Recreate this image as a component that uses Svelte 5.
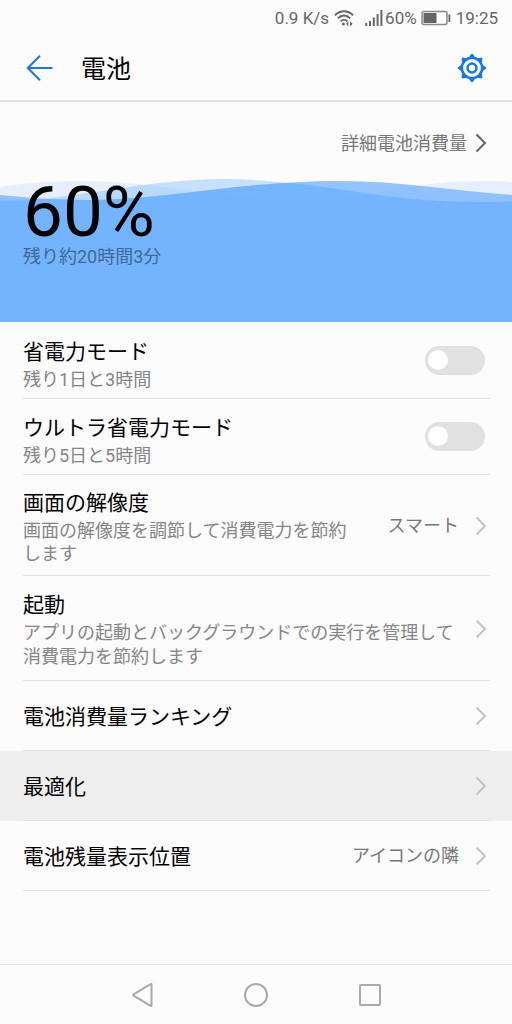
<script lang="ts">
	type Row = {
		id: string;
		title: string;
		description?: string;
		value?: string;
		kind: 'toggle' | 'link';
		tall?: boolean;
		pressed?: boolean;
	};

	const rows: Row[] = [
		{ id: 'saver', title: '省電力モード', description: '残り1日と3時間', kind: 'toggle' },
		{ id: 'ultra', title: 'ウルトラ省電力モード', description: '残り5日と5時間', kind: 'toggle' },
		{
			id: 'resolution',
			title: '画面の解像度',
			description: '画面の解像度を調節して消費電力を節約します',
			value: 'スマート',
			kind: 'link'
		},
		{
			id: 'launch',
			title: '起動',
			description: 'アプリの起動とバックグラウンドでの実行を管理して消費電力を節約します',
			kind: 'link',
			tall: true
		},
		{ id: 'ranking', title: '電池消費量ランキング', kind: 'link' },
		{ id: 'optimize', title: '最適化', kind: 'link', pressed: true },
		{ id: 'position', title: '電池残量表示位置', value: 'アイコンの隣', kind: 'link' }
	];

	const teeth = [0, 45, 90, 135, 180, 225, 270, 315];

	let enabled = $state<Record<string, boolean>>({ saver: false, ultra: false });
</script>

{#snippet chevron()}
	<svg class="chevron" viewBox="0 0 12 20" aria-hidden="true">
		<path d="M1.5 1.5 10 10l-8.5 8.5" />
	</svg>
{/snippet}

<div class="screen">
	<div class="status">
		<span>0.9 K/s</span>
		<svg class="wifi" width="20" height="18" viewBox="0 0 20 18" aria-hidden="true">
			<path d="M1 6.2C6 .8 14 .8 19 6.2M3.8 9.4c3.6-3.8 8.8-3.8 12.4 0M6.6 12.4c2-2 4.8-2 6.8 0" />
			<circle cx="9.4" cy="15" r="1.5" />
			<path class="solid" d="m12 14.8 2.3-2.6v5.2zM18.6 14.8l-2.6-2.6v5.2z" />
		</svg>
		<svg class="signal" width="18" height="18" viewBox="0 0 18 18" aria-hidden="true">
			<path d="M1.2 17v-3M5 17v-5M8.8 17V8.5M12.6 17V5M16.4 17V1" />
		</svg>
		<span>60%</span>
		<svg class="battery" width="30" height="16" viewBox="0 0 30 16" aria-hidden="true">
			<rect class="case" x="1" y="1.5" width="25" height="13" rx="2" />
			<rect x="2.5" y="3" width="13" height="10" />
			<rect x="27.5" y="4.5" width="1.8" height="7.5" />
		</svg>
		<span>19:25</span>
	</div>

	<header>
		<button class="icon-button" aria-label="戻る">
			<svg width="28" height="28" viewBox="0 0 28 28">
				<path d="M14 1.8 1.8 14 14 26.2M1.8 14h24.7" />
			</svg>
		</button>
		<h1>電池</h1>
		<button class="icon-button" aria-label="設定">
			<svg width="30" height="30" viewBox="-15 -15 30 30">
				<circle r="10.2" />
				<circle r="4.4" />
				{#each teeth as angle}
					<path class="tooth" d="M-3-10.5-1.6-13Q0-15.6 1.6-13L3-10.5z" transform="rotate({angle})" />
				{/each}
			</svg>
		</button>
	</header>

	<main>
		<a class="details" href="#details">
			<span>詳細電池消費量</span>
			{@render chevron()}
		</a>

		<section class="level">
			<svg class="waves" viewBox="0 0 512 143" preserveAspectRatio="none" aria-hidden="true">
				<path opacity=".16" d="M0 8C60-1 110 1 170 9S270 21 300 21C370 21 410 2 480 2 492 2 502 2 512 3V143H0z" />
				<path opacity=".38" d="M0 22C80 21 140 0 225 0 310 0 370 23 475 23 490 23 500 23 512 22V143H0z" />
				<path opacity=".75" d="M0 16C30 19 55 21 85 21 170 21 240 2 340 2 400 2 455 12 512 16V143H0z" />
				<path
					opacity=".8"
					d="M0 22C30 22 55 19 85 21 160 21 215 7 292 4 350 10 400 23 475 23 490 23 500 23 512 22V143H0z"
				/>
			</svg>
			<div class="reading">
				<strong>60%</strong>
				<span>残り約20時間3分</span>
			</div>
		</section>

		<ul>
			{#each rows as row (row.id)}
				<li class:pressed={row.pressed}>
					{#if row.kind === 'toggle'}
						<label class="row toggle-row">
							<span class="copy">
								<span class="title">{row.title}</span>
								<span class="description">{row.description}</span>
							</span>
							<input type="checkbox" role="switch" bind:checked={enabled[row.id]} />
						</label>
					{:else}
						<a class="row" class:tall={row.tall} href="#{row.id}">
							<span class="copy">
								<span class="title">{row.title}</span>
								{#if row.description}
									<span class="description">{row.description}</span>
								{/if}
							</span>
							{#if row.value}
								<span class="value">{row.value}</span>
							{/if}
							{@render chevron()}
						</a>
					{/if}
				</li>
			{/each}
		</ul>
	</main>

	<nav>
		<button aria-label="戻る">
			<svg width="24" height="26" viewBox="0 0 24 26">
				<path d="M21.5 2.5v21q0 .8-.8.4L3.6 13.7q-.8-.7 0-1.4L20.7 2.1q.8-.4.8.4z" />
			</svg>
		</button>
		<button aria-label="ホーム">
			<svg width="24" height="26" viewBox="0 0 24 26"><circle cx="12" cy="13" r="11" /></svg>
		</button>
		<button aria-label="最近のアプリ">
			<svg width="24" height="26" viewBox="0 0 24 26">
				<rect x="2" y="3" width="20" height="20" rx="1" />
			</svg>
		</button>
	</nav>
</div>

<style>
	:global(body) {
		margin: 0;
		background: #fcfcfc;
	}

	.screen {
		display: flex;
		flex-direction: column;
		min-height: 100vh;
		background: #fcfcfc;
		color: #000;
		font-family: Roboto, 'Noto Sans CJK JP', sans-serif;
		font-size: 18px;
		line-height: 24px;
	}

	button {
		display: grid;
		place-items: center;
		padding: 0;
		border: 0;
		background: none;
		cursor: pointer;
	}

	a {
		color: inherit;
		text-decoration: none;
	}

	.status {
		display: flex;
		align-items: center;
		justify-content: flex-end;
		height: 36px;
		padding-right: 14px;
		color: #666;
		font-size: 17px;
	}

	.status svg {
		fill: #666;
	}

	.wifi {
		margin: 0 11px 0 5px;
	}

	.wifi path {
		fill: none;
		stroke: #666;
		stroke-width: 2;
	}

	.wifi .solid {
		fill: #666;
		stroke: none;
	}

	.signal {
		margin-right: 2px;
	}

	.signal path {
		stroke: #666;
		stroke-width: 2;
	}

	.battery {
		margin: 0 5px 0 4px;
	}

	.battery .case {
		fill: none;
		stroke: #888;
		stroke-width: 1.5;
	}

	header {
		display: flex;
		align-items: center;
		height: 64px;
		padding: 0 25px 0 26px;
		border-bottom: 2px solid #e0e0e0;
	}

	h1 {
		flex: 1;
		margin: 0 0 0 27px;
		padding-top: 4px;
		font-size: 25px;
		font-weight: 400;
		line-height: 36px;
	}

	.icon-button svg {
		fill: none;
		stroke: #1478e6;
		stroke-width: 2;
	}

	.icon-button circle {
		stroke-width: 2.5;
	}

	.icon-button .tooth {
		fill: #1478e6;
		stroke: none;
	}

	main {
		flex: 1;
	}

	.details {
		display: flex;
		align-items: center;
		justify-content: flex-end;
		gap: 8px;
		box-sizing: border-box;
		height: 77px;
		padding: 4px 25px 0 0;
		color: #777;
	}

	.details span {
		padding-top: 2px;
	}

	.chevron {
		flex: none;
		width: 12px;
		height: 20px;
		fill: none;
		stroke: #c4c4c4;
		stroke-width: 2;
	}

	.details .chevron {
		stroke: #666;
	}

	.level {
		display: grid;
		height: 143px;
	}

	.waves,
	.reading {
		grid-area: 1 / 1;
	}

	.waves {
		width: 100%;
		height: 143px;
		fill: #70b2ff;
	}

	.reading {
		z-index: 1;
		display: flex;
		flex-direction: column;
		padding-left: 23px;
		color: #416990;
	}

	.reading strong {
		color: #000;
		font-size: 71px;
		font-weight: 400;
		line-height: 66px;
	}

	ul {
		margin: 0;
		padding: 1px 0 0;
		list-style: none;
	}

	.pressed {
		background: #eee;
	}

	.row {
		display: flex;
		align-items: center;
		gap: 16px;
		box-sizing: border-box;
		min-height: 70px;
		margin: 0 22px 0 23px;
		padding: 11px 3px 10px 0;
		border-bottom: 1px solid #e3e3e3;
		cursor: pointer;
	}

	.tall {
		min-height: 105px;
	}

	.toggle-row {
		min-height: 76px;
		padding: 6px 5px 7px 0;
	}

	.copy {
		flex: 1;
		min-width: 0;
		padding-top: 2px;
	}

	.toggle-row .copy {
		padding-top: 7px;
	}

	.title,
	.description {
		display: block;
	}

	.title {
		font-size: 21px;
		line-height: 31px;
	}

	.description {
		color: #858585;
		line-height: 23px;
	}

	.tall .description {
		line-height: 24px;
	}

	.value {
		flex: none;
		padding-left: 14px;
		color: #777;
	}

	input {
		flex: none;
		display: flex;
		align-items: center;
		appearance: none;
		box-sizing: border-box;
		width: 60px;
		height: 29px;
		margin: 0;
		padding: 0 3px;
		border-radius: 15px;
		background: #e1e1e1;
		cursor: pointer;
	}

	input::before {
		content: '';
		width: 20px;
		height: 20px;
		border-radius: 50%;
		background: #fff;
	}

	input:checked {
		justify-content: flex-end;
		background: #1478e6;
	}

	nav {
		display: flex;
		justify-content: center;
		gap: 74px;
		height: 59px;
		border-top: 1px solid #e3e3e3;
	}

	nav button {
		width: 40px;
	}

	nav svg {
		fill: none;
		stroke: #aaa;
		stroke-width: 2;
	}
</style>
